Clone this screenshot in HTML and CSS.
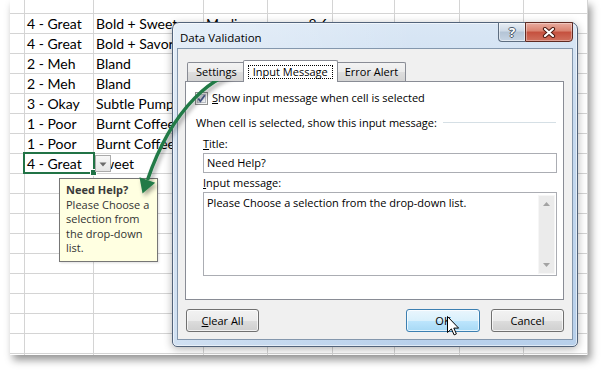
FILE: index.html
```html
<!DOCTYPE html>
<html>
<head>
<meta charset="utf-8">
<title>Data Validation</title>
<link rel="stylesheet" href="styles.css">
</head>
<body>
<div class="sheet">
  <div class="grid">
    <span></span><span></span><span></span><span></span><span></span><span></span><span></span><span></span><span></span>
    <span></span><span>4 - Great</span><span>Bold + Sweet</span><span>Medium</span><span class="num">8.6</span><span></span><span></span><span></span><span></span>
    <span></span><span>4 - Great</span><span>Bold + Savory</span><span></span><span></span><span></span><span></span><span></span><span></span>
    <span></span><span>2 - Meh</span><span>Bland</span><span></span><span></span><span></span><span></span><span></span><span></span>
    <span></span><span>2 - Meh</span><span>Bland</span><span></span><span></span><span></span><span></span><span></span><span></span>
    <span></span><span>3 - Okay</span><span>Subtle Pumpkin</span><span></span><span></span><span></span><span></span><span></span><span></span>
    <span></span><span>1 - Poor</span><span>Burnt Coffee</span><span></span><span></span><span></span><span></span><span></span><span></span>
    <span></span><span>1 - Poor</span><span>Burnt Coffee</span><span></span><span></span><span></span><span></span><span></span><span></span>
    <span></span><span>4 - Great</span><span>Sweet</span><span></span><span></span><span></span><span></span><span></span><span></span>
    <span></span><span></span><span></span><span></span><span></span><span></span><span></span><span></span><span></span>
    <span></span><span></span><span></span><span></span><span></span><span></span><span></span><span></span><span></span>
    <span></span><span></span><span></span><span></span><span></span><span></span><span></span><span></span><span></span>
    <span></span><span></span><span></span><span></span><span></span><span></span><span></span><span></span><span></span>
    <span></span><span></span><span></span><span></span><span></span><span></span><span></span><span></span><span></span>
    <span></span><span></span><span></span><span></span><span></span><span></span><span></span><span></span><span></span>
    <span></span><span></span><span></span><span></span><span></span><span></span><span></span><span></span><span></span>
    <span></span><span></span><span></span><span></span><span></span><span></span><span></span><span></span><span></span>
    <span></span><span></span><span></span><span></span><span></span><span></span><span></span><span></span><span></span>
    <span></span><span></span><span></span><span></span><span></span><span></span><span></span><span></span><span></span>
  </div>
</div>

<div class="sel"><span class="handle"></span></div>
<div class="dd"><svg width="8" height="5" viewBox="0 0 8 5"><path d="M0.5 0.5 H7.5 L4 4.5 Z" fill="#6b6b6b"/></svg></div>

<div class="tip">
  <b>Need Help?</b>
  Please Choose a selection from the drop-down list.
</div>

<div class="dialog">
  <div class="titlebar">
    <span class="title">Data Validation</span>
    <div class="caps">
      <span class="help">?</span>
      <span class="close"><svg width="14" height="11" viewBox="0 0 14 11"><path d="M3 2 L11 9 M11 2 L3 9" stroke="#4d1a12" stroke-width="4.2" stroke-linecap="round"/><path d="M3 2 L11 9 M11 2 L3 9" stroke="#fff" stroke-width="2.2" stroke-linecap="round"/></svg></span>
    </div>
  </div>
  <div class="client">
    <div class="tabs">
      <span class="tab">Settings</span>
      <span class="tab on"><span class="focus">Input Message</span></span>
      <span class="tab">Error Alert</span>
    </div>
    <div class="panel">
      <div class="chk-row">
        <svg class="chk" width="13" height="13" viewBox="0 0 13 13">
          <defs><linearGradient id="cg" x1="0" y1="0" x2="1" y2="1"><stop offset="0" stop-color="#cfd4da"/><stop offset="1" stop-color="#f7f8f9"/></linearGradient></defs>
          <rect x="0.5" y="0.5" width="12" height="12" fill="#f5f5f5" stroke="#8e8f8f"/>
          <rect x="2.5" y="2.5" width="8" height="8" fill="url(#cg)" stroke="#b9bec5"/>
          <path d="M3.3 6.4 L5.4 9.2 L9.8 3.2" fill="none" stroke="#4a5c93" stroke-width="1.7"/>
        </svg>
        <span><u>S</u>how input message when cell is selected</span>
      </div>
      <div class="group"><span>When cell is selected, show this input message:</span><span class="etch"></span></div>
      <div class="fields">
        <div class="lbl"><u>T</u>itle:</div>
        <div class="textbox">Need Help?</div>
        <div class="lbl lbl2"><u>I</u>nput message:</div>
        <div class="textarea">
          <div class="txt">Please Choose a selection from the drop-down list.</div>
          <div class="vscroll">
            <svg width="7" height="4" viewBox="0 0 7 4"><path d="M0 4 H7 L3.5 0 Z" fill="#a3a3a3"/></svg>
            <svg width="7" height="4" viewBox="0 0 7 4"><path d="M0 0 H7 L3.5 4 Z" fill="#a3a3a3"/></svg>
          </div>
        </div>
      </div>
    </div>
    <div class="buttons">
      <span class="btn"><u>C</u>lear All</span>
      <span class="btn ok">OK</span>
      <span class="btn cancel">Cancel</span>
    </div>
  </div>
</div>

<svg class="arrow" width="608" height="374" viewBox="0 0 608 374">
  <defs>
    <filter id="sh" x="-20%" y="-20%" width="140%" height="140%">
      <feDropShadow dx="2" dy="3" stdDeviation="2" flood-color="#000" flood-opacity="0.35"/>
    </filter>
  </defs>
  <g filter="url(#sh)">
    <path d="M249 71 C215 70 172 108 147.5 180" fill="none" stroke="#217a46" stroke-width="3.5"/>
    <path d="M142.5 193.5 L139.5 177.3 L155.2 182.8 Z" fill="#217a46"/>
  </g>
</svg>

<svg class="cursor" width="13" height="21" viewBox="0 0 13 21"><path d="M0.5 0.5 V16.5 L4.4 12.9 L7.1 18.9 L9.4 17.9 L6.8 12.1 H11.6 Z" fill="#fff" stroke="#000" stroke-linejoin="round"/></svg>
</body>
</html>
```

FILE: styles.css
```css
* { box-sizing: border-box; }

body {
  margin: 0;
  width: 608px;
  height: 374px;
  position: relative;
  overflow: hidden;
  background: #fff;
}

/* spreadsheet */
.sheet {
  margin-left: 10px;
  width: 578px;
  height: 355px;
  overflow: hidden;
  background: #fff;
  box-shadow: 3px 5px 8px rgba(0, 0, 0, 0.42);
}
.grid {
  display: grid;
  grid-template-columns: 15px 69px 110px 64px 65px 62px 65px 64px 64px;
  grid-template-rows: 14px;
  grid-auto-rows: 20px;
  font-family: Lato, "Liberation Sans", sans-serif;
  font-size: 14px;
  line-height: 19px;
  color: #000;
}
.grid span {
  border-right: 1px solid #d4d4d4;
  border-bottom: 1px solid #d4d4d4;
  padding: 0 2px;
  white-space: nowrap;
  overflow: hidden;
}
.grid .num { text-align: right; padding-right: 4px; }

.sel {
  position: absolute;
  left: 23px;
  top: 152px;
  width: 72px;
  height: 22px;
  border: 2px solid #217346;
}
.handle {
  position: absolute;
  right: -4px;
  bottom: -4px;
  width: 7px;
  height: 7px;
  background: #217346;
  border: 1px solid #fff;
}
.dd {
  position: absolute;
  left: 95px;
  top: 155px;
  width: 16px;
  height: 17px;
  border: 1px solid #ababab;
  background: linear-gradient(#f8f8f8, #e5e5e5);
  display: flex;
  align-items: center;
  justify-content: center;
}
.dd svg { display: block; margin-top: 1px; }

/* input message tooltip */
.tip {
  position: absolute;
  left: 59px;
  top: 178px;
  width: 99px;
  height: 84px;
  background: #ffffe1;
  border: 1px solid #767676;
  padding: 4px 2px 0 6px;
  font-family: "Open Sans", "Liberation Sans", sans-serif;
  font-size: 11px;
  line-height: 14.5px;
  color: #333;
  box-shadow: 1px 1px 2px rgba(0, 0, 0, 0.12);
}
.tip b { display: block; color: #3a3a3a; }

/* dialog */
.dialog {
  position: absolute;
  left: 172px;
  top: 22px;
  width: 406px;
  height: 325px;
  border: 1px solid #52637a;
  border-radius: 7px 7px 5px 5px;
  background:
    linear-gradient(90deg, rgba(255, 255, 255, 0.35), rgba(255, 255, 255, 0) 60%),
    linear-gradient(#dae7f5, #c7daef 30%, #b8d0eb);
  box-shadow: inset 0 0 0 1px rgba(255, 255, 255, 0.55), 0 2px 8px rgba(0, 0, 0, 0.3);
  padding: 0 4px 6px 4px;
  display: flex;
  flex-direction: column;
  font-family: "Open Sans", "Liberation Sans", sans-serif;
  font-size: 11px;
  color: #000;
}
.titlebar {
  height: 25px;
  display: flex;
  justify-content: space-between;
  align-items: flex-start;
  padding-left: 3px;
}
.title { margin-top: 7px; line-height: 15px; font-size: 11.5px; }
.caps { display: flex; margin-top: -1px; }
.help {
  width: 27px;
  height: 20px;
  border: 1px solid #5d6d80;
  border-right: none;
  border-radius: 0 0 0 4px;
  background: linear-gradient(#e7edf4, #cdd9e6 45%, #b4c4d6 50%, #c6d4e3);
  box-shadow: inset 0 0 0 1px rgba(255, 255, 255, 0.5);
  color: #fff;
  font-weight: bold;
  font-size: 13px;
  line-height: 18px;
  text-align: center;
  text-shadow: 1px 0 0 #4b5869, -1px 0 0 #4b5869, 0 1px 0 #4b5869, 0 -1px 0 #4b5869;
}
.close {
  width: 48px;
  height: 20px;
  border: 1px solid #5f2a22;
  border-radius: 0 0 4px 0;
  background: linear-gradient(#e8ab9f, #d9826f 45%, #c5503e 50%, #d0705d);
  box-shadow: inset 0 0 0 1px rgba(255, 255, 255, 0.35);
  display: flex;
  align-items: center;
  justify-content: center;
}
.close svg { display: block; }

.client {
  flex: 1;
  background: #f0f0f0;
  border: 1px solid #8497ad;
  padding: 11px 8px 0 7px;
  display: flex;
  flex-direction: column;
}
.tabs {
  display: flex;
  align-items: flex-end;
  height: 22px;
  margin-bottom: -1px;
  padding-left: 2px;
  position: relative;
  z-index: 1;
}
.tab {
  height: 19px;
  margin-bottom: 1px;
  border: 1px solid #898c95;
  border-bottom: none;
  border-radius: 2px 2px 0 0;
  background: linear-gradient(#f3f3f3, #ebebeb 50%, #dedede 50%, #d4d4d4);
  padding: 0 7px 0 8px;
  line-height: 17px;
  white-space: nowrap;
}
.tab.on {
  height: 22px;
  margin: 0 -2px;
  background: #fff;
  padding: 4px 4px 0;
  position: relative;
  z-index: 2;
}
.focus {
  display: block;
  border: 1px dotted #000;
  padding: 0 4px;
  line-height: 12px;
}
.panel {
  height: 219px;
  background: #fff;
  border: 1px solid #898c95;
}
.chk-row {
  display: flex;
  align-items: center;
  height: 14px;
  margin-top: 9px;
  padding-left: 9px;
  line-height: 14px;
}
.chk { display: block; margin-right: 4px; flex: none; }
.group {
  display: flex;
  align-items: center;
  margin-top: 11px;
  padding: 0 7px 0 10px;
  line-height: 14px;
  white-space: nowrap;
}
.etch {
  flex: 1;
  height: 2px;
  margin-left: 6px;
  border-top: 1px solid #d5dfe5;
  border-bottom: 1px solid #fff;
}
.fields { padding-left: 17px; }
.lbl { margin-top: 7px; line-height: 14px; }
.lbl2 { margin-top: 3px; }
.textbox {
  margin-top: 2px;
  width: 354px;
  height: 20px;
  border: 1px solid #abadb3;
  padding: 0 3px;
  line-height: 18px;
}
.textarea {
  margin-top: 2px;
  width: 354px;
  height: 84px;
  border: 1px solid #abadb3;
  display: flex;
}
.txt { flex: 1; padding: 3px 3px 0; line-height: 14px; }
.vscroll {
  width: 17px;
  margin: 2px 1px 1px 0;
  background: #ebebeb;
  border: 1px solid #f6f6f6;
  display: flex;
  flex-direction: column;
  justify-content: space-between;
  align-items: center;
  padding: 6px 0 6px;
}
.vscroll svg { display: block; }

.buttons {
  display: flex;
  margin-top: 9px;
  padding-left: 1px;
}
.btn {
  width: 73px;
  height: 23px;
  border: 1px solid #707070;
  border-radius: 3px;
  background: linear-gradient(#f2f2f2, #ebebeb 50%, #dddddd 50%, #cfcfcf);
  box-shadow: inset 0 0 0 1px rgba(255, 255, 255, 0.7);
  display: flex;
  align-items: center;
  justify-content: center;
  line-height: 14px;
}
.btn.ok {
  width: 74px;
  margin-left: auto;
  border-color: #3c7fb1;
  background: linear-gradient(#eaf6fd, #d9f0fc 50%, #bee6fd 50%, #a7d9f5);
}
.btn.cancel { margin-left: 11px; }

/* overlays */
.arrow {
  position: absolute;
  left: 0;
  top: 0;
  pointer-events: none;
}
.cursor {
  position: absolute;
  left: 447px;
  top: 316px;
}
```
